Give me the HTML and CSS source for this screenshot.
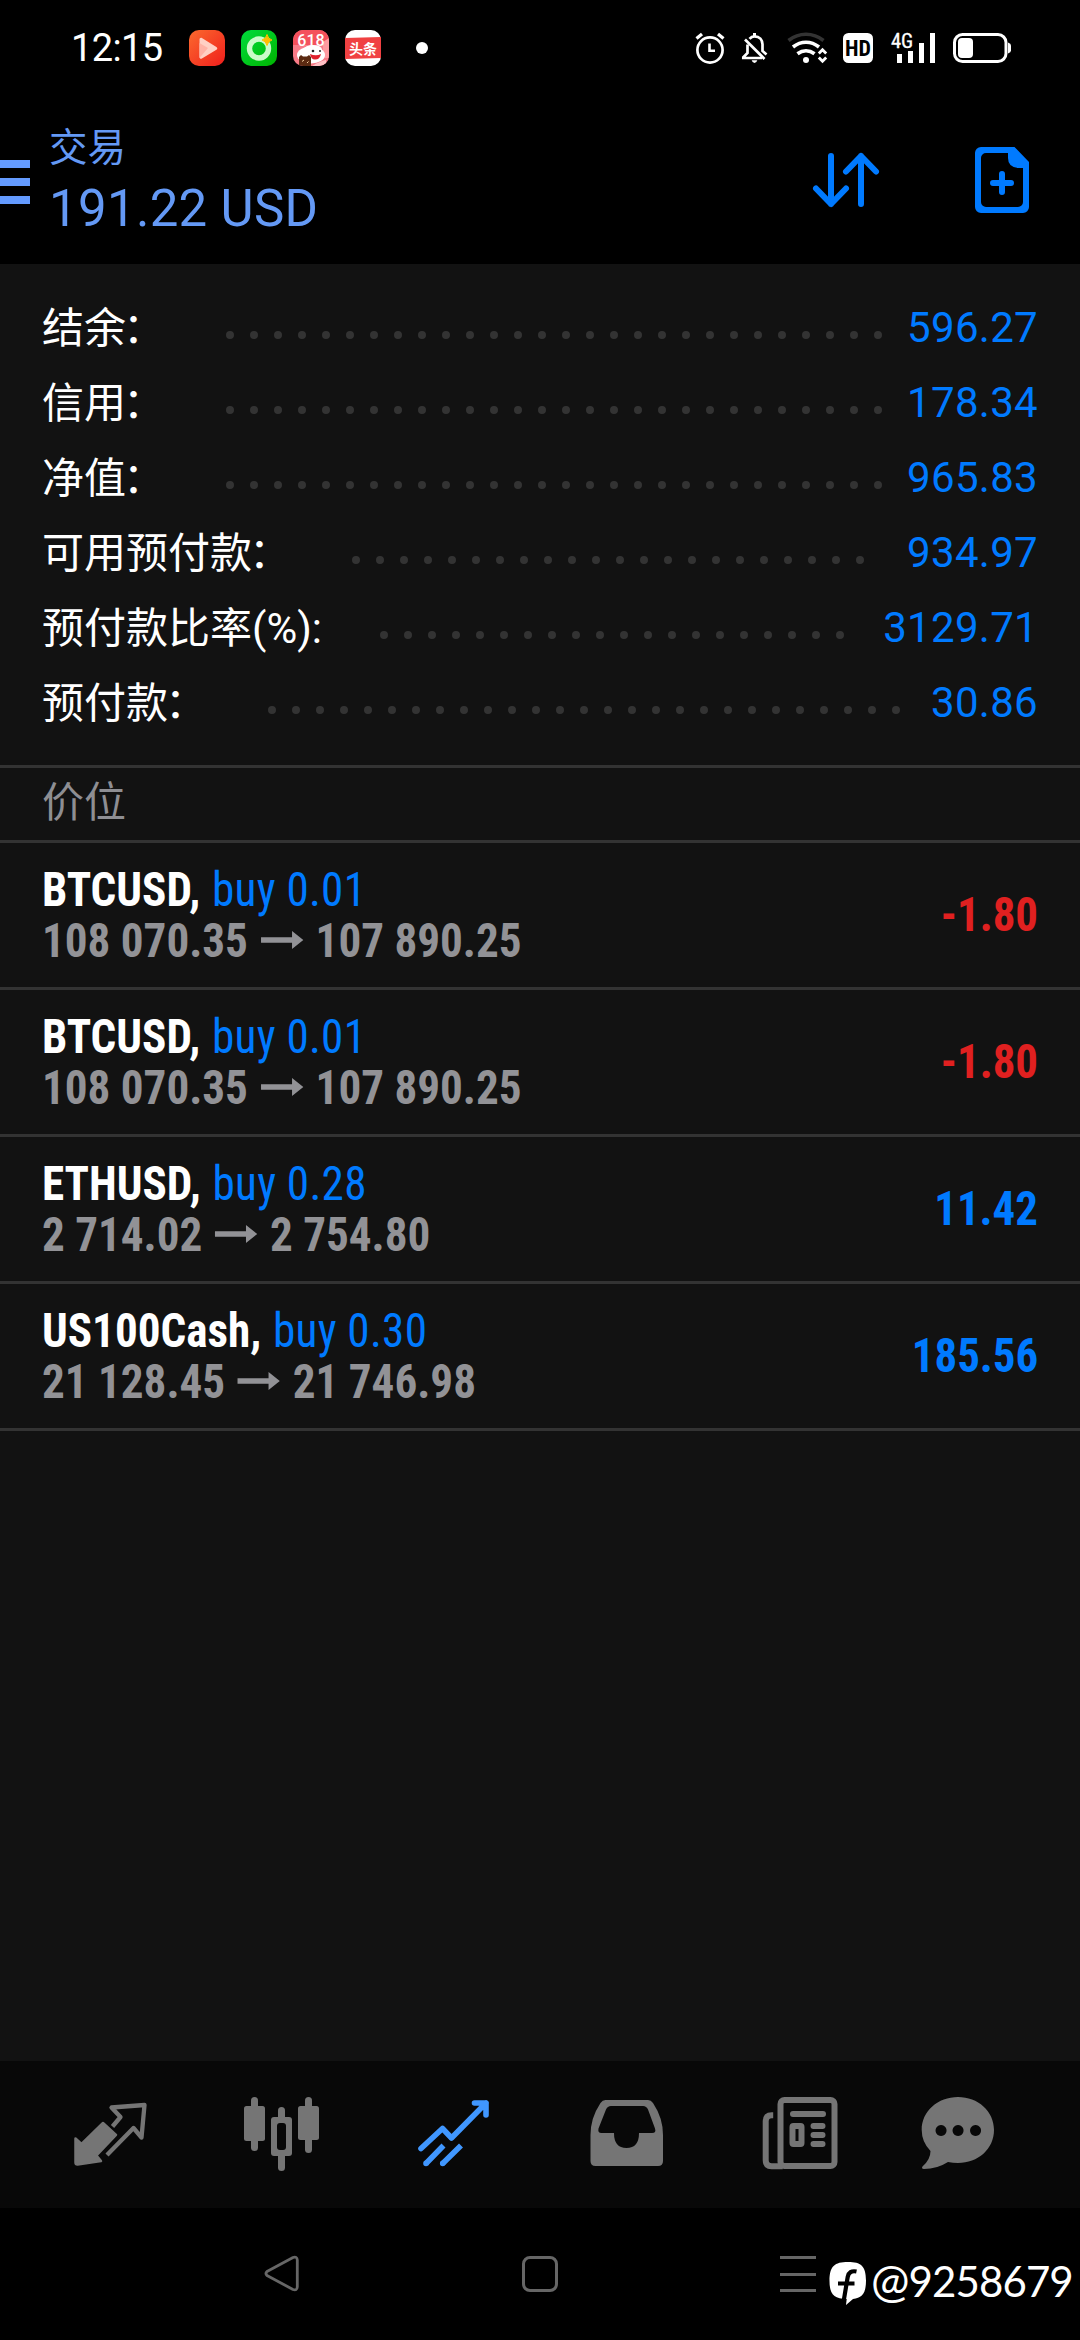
FILE: index.html
```html
<!DOCTYPE html>
<html lang="zh-CN">
<head>
<meta charset="utf-8">
<title>交易</title>
<link rel="stylesheet" href="styles.css">
</head>
<body>
<div class="screen">
  <div class="status">
    <span class="clock">12:15</span>
    <div class="apps">
      <svg width="36" height="36" viewBox="0 0 36 36">
        <defs><linearGradient id="gr" x1="0" y1="0" x2="1" y2="1"><stop offset="0" stop-color="#fb6a2e"/><stop offset="1" stop-color="#f01e1c"/></linearGradient></defs>
        <rect width="36" height="36" rx="10" fill="url(#gr)"/>
        <path d="M10.500 9.500v17.500c0 1.600 1.200 2.200 2.400 1.500l14.500-8.700c1.200-.8 1.200-2 0-2.800l-14.500-9C11.700 7.200 10.500 8.200 10.500 9.500z" fill="#ffd0c4"/>
        <path d="M10.500 13v15l8.500-10z" fill="#ffb3a6"/>
      </svg>
      <svg width="36" height="36" viewBox="0 0 36 36">
        <defs><linearGradient id="gg" x1="0" y1="0" x2="1" y2="1"><stop offset="0" stop-color="#00dc3c"/><stop offset="1" stop-color="#00b400"/></linearGradient></defs>
        <rect width="36" height="36" rx="10" fill="url(#gg)"/>
        <circle cx="18" cy="18.500" r="9.500" fill="none" stroke="#c9fbc9" stroke-width="5.400"/>
        <path d="M26 4.500q1 4.500 5 5.500-4 1-5 5.500-1-4.500-5-5.500 4-1 5-5.500z" fill="#ffbe00" stroke="#ffbe00" stroke-width="1"/>
      </svg>
      <svg width="36" height="36" viewBox="0 0 36 36">
        <defs><clipPath id="cp"><rect width="36" height="36" rx="10"/></clipPath></defs>
        <g clip-path="url(#cp)">
          <rect width="36" height="36" fill="#f97b88"/>
          <rect width="36" height="15" fill="#f4515c"/>
          <path d="M36 8v20h-6V12z" fill="#ff9aa0"/>
          <text x="18" y="16" text-anchor="middle" class="badge-618">618</text>
          <ellipse cx="18" cy="25" rx="14" ry="8.500" fill="#fff"/>
          <ellipse cx="20" cy="19.500" rx="9" ry="4.500" fill="#fff"/>
          <circle cx="20" cy="21" r="1.300" fill="#222"/><circle cx="27" cy="21" r="1" fill="#222"/>
          <path d="M17 24q6 2.500 11 0-1 5.500-6 5.500-4 0-5-5.500z" fill="#e0202c"/>
          <path d="M19 36q8-5 14-6v6z" fill="#ffc0c4"/>
          <path d="M6 27l2-2 2 1.500h4l2-1.500 2 2v9H6z" fill="#5a2a12"/>
          <path d="M9 31.500l2-1.500m3 3 1.500-1.500" stroke="#f4d0a0" stroke-width="1"/>
        </g>
      </svg>
      <svg width="36" height="36" viewBox="0 0 36 36">
        <rect width="36" height="36" rx="10" fill="#fff"/>
        <path d="M0 8l36-1v21L0 29z" fill="#f04142"/>
        <text x="18" y="23.500" text-anchor="middle" class="badge-toutiao">头条</text>
      </svg>
    </div>
    <span class="more-dot"></span>
    <div class="system">
      <svg class="alarm" width="30" height="32" viewBox="695 32 30 32" fill="none" stroke="#fff">
        <circle cx="710" cy="50" r="12.600" stroke-width="2.700"/>
        <path d="M709.500 43.500v7.300h5.500" stroke-width="2.600"/>
        <path d="M696.500 38.500l5.500-4.600M723.500 38.500l-5.500-4.600" stroke-width="3.200"/>
      </svg>
      <svg class="bell" width="28" height="32" viewBox="741 32 28 32" fill="none" stroke="#fff" stroke-width="2.700">
        <path d="M747.500 44.500V53l-4.200 4.200v.8H762"/>
        <path d="M749.500 38.800c1.400-1.700 3.100-2.500 5-2.500 5 0 8 3.400 8 8V51l4 3.500"/>
        <path d="M745 39.500L764.500 59"/>
        <path d="M754.500 33v3" stroke-width="3"/>
        <path d="M751.700 60.200h5.600q-.8 2.800-2.800 2.800t-2.800-2.800z" fill="#fff" stroke="none"/>
      </svg>
      <svg class="wifi" width="42" height="32" viewBox="787 32 42 32" fill="none" stroke="#fff" stroke-width="3.600">
        <path d="M788.500 40.500q8-6.200 17.500-6.200t17.500 6.200" stroke="#333"/>
        <path d="M793 47q6-4.800 13-4.800t13 4.800"/>
        <path d="M797.500 53.800q4-3 8.500-3t8.500 3"/>
        <circle cx="806" cy="60" r="3" fill="#fff" stroke="none"/>
        <path d="M818.800 53.500l3.700-3.800 3.700 3.800M818.800 57.500l3.700 3.800 3.700-3.800" stroke-width="2.800"/>
      </svg>
      <svg class="hd" width="30" height="30" viewBox="0 0 30 30">
        <rect width="30" height="30" rx="5.500" fill="#fff"/>
        <text x="15" y="22.800" text-anchor="middle" class="hd-text">HD</text>
      </svg>
      <svg class="signal" width="46" height="32" viewBox="890 32 46 32">
        <text x="891" y="48" class="net-text">4G</text>
        <path d="M899.500 54v9M910.500 51v12M921.500 43v20M932.500 33v30" stroke="#fff" stroke-width="5"/>
      </svg>
      <svg class="battery" width="60" height="32" viewBox="952 32 60 32">
        <rect x="954.500" y="34.500" width="51.500" height="27" rx="8" fill="none" stroke="#fff" stroke-width="3"/>
        <rect x="958" y="38" width="15" height="20" rx="4" fill="#fff"/>
        <path d="M1008 42.500q3 1 3 3v5q0 2-3 3z" fill="#fff"/>
      </svg>
    </div>
  </div>

  <header class="header">
    <div class="burger"><i></i><i></i><i></i></div>
    <div class="titles">
      <div class="title">交易</div>
      <div class="total">191.22 USD</div>
    </div>
    <svg class="sort" width="68" height="56" viewBox="812 152 68 56" fill="none" stroke="#007aff" stroke-width="6" stroke-linecap="round" stroke-linejoin="round">
      <path d="M831 156v48M816 188.500l15 15.500 15-15.500M861 204v-48M846 171.500l15-15.500 15 15.500"/>
    </svg>
    <svg class="new" width="54" height="66" viewBox="975 147 54 66">
      <path fill="#007aff" fill-rule="evenodd" d="M981 147h33.500l14.500 15v45a6 6 0 0 1-6 6h-42a6 6 0 0 1-6-6v-54a6 6 0 0 1 6-6zM986 153a5 5 0 0 0-5 5v44a5 5 0 0 0 5 5h32a5 5 0 0 0 5-5v-34h-5q-10-1-10-10v-5z"/>
      <path d="M1002 174v18M993 183h18" stroke="#007aff" stroke-width="6" stroke-linecap="round"/>
    </svg>
  </header>

  <main class="content">
    <section class="summary">
      <div class="row"><span>结余<i>：</i></span><svg class="leader" height="8"><line x1="0" y1="4" x2="100%" y2="4"/></svg><b>596.27</b></div>
      <div class="row"><span>信用<i>：</i></span><svg class="leader" height="8"><line x1="0" y1="4" x2="100%" y2="4"/></svg><b>178.34</b></div>
      <div class="row"><span>净值<i>：</i></span><svg class="leader" height="8"><line x1="0" y1="4" x2="100%" y2="4"/></svg><b>965.83</b></div>
      <div class="row"><span>可用预付款<i>：</i></span><svg class="leader" height="8"><line x1="0" y1="4" x2="100%" y2="4"/></svg><b>934.97</b></div>
      <div class="row"><span>预付款比率(%):</span><svg class="leader" height="8"><line x1="0" y1="4" x2="100%" y2="4"/></svg><b>3129.71</b></div>
      <div class="row"><span>预付款<i>：</i></span><svg class="leader" height="8"><line x1="0" y1="4" x2="100%" y2="4"/></svg><b>30.86</b></div>
    </section>
    <h2 class="section">价位</h2>
    <section class="positions">
      <article class="position">
        <div class="deal"><p class="symbol">BTCUSD, <em>buy 0.01</em></p>
        <p class="prices">108 070.35<svg class="arrow" viewBox="0 0 45 18"><path d="M0 6.200h33V0l12 9-12 9v-6.200H0z"/></svg>107 890.25</p></div>
        <span class="profit loss">-1.80</span>
      </article>
      <article class="position">
        <div class="deal"><p class="symbol">BTCUSD, <em>buy 0.01</em></p>
        <p class="prices">108 070.35<svg class="arrow" viewBox="0 0 45 18"><path d="M0 6.200h33V0l12 9-12 9v-6.200H0z"/></svg>107 890.25</p></div>
        <span class="profit loss">-1.80</span>
      </article>
      <article class="position">
        <div class="deal"><p class="symbol">ETHUSD, <em>buy 0.28</em></p>
        <p class="prices">2 714.02<svg class="arrow" viewBox="0 0 45 18"><path d="M0 6.200h33V0l12 9-12 9v-6.200H0z"/></svg>2 754.80</p></div>
        <span class="profit">11.42</span>
      </article>
      <article class="position">
        <div class="deal"><p class="symbol">US100Cash, <em>buy 0.30</em></p>
        <p class="prices">21 128.45<svg class="arrow" viewBox="0 0 45 18"><path d="M0 6.200h33V0l12 9-12 9v-6.200H0z"/></svg>21 746.98</p></div>
        <span class="profit">185.56</span>
      </article>
    </section>
  </main>

  <nav class="tabs">
    <svg width="80" height="80" viewBox="70 2094 80 80">
      <path d="M103 2123l13 12-19.500 20.500 4.500 5.500-23.500 3.500q-2 0-2-2v-24l6 5.500z" fill="currentColor" stroke="currentColor" stroke-width="2.500" stroke-linejoin="round"/>
      <path d="M112.500 2126.500l8-9.500-9-9.500 33-2.500-3 32.500-8-9.500-26.500 27" fill="none" stroke="currentColor" stroke-width="4.300" stroke-linejoin="round"/>
    </svg>
    <svg width="80" height="80" viewBox="242 2094 80 80" fill="currentColor">
      <rect x="251" y="2097" width="7" height="54" rx="3.500"/><rect x="244" y="2106" width="21" height="35" rx="2.500"/>
      <rect x="305" y="2097" width="7" height="56" rx="3.500"/><rect x="298" y="2106" width="21" height="34" rx="2.500"/>
      <rect x="278" y="2107" width="7" height="16" rx="3.500"/><rect x="278" y="2150" width="7" height="21" rx="3.500"/>
      <path d="M274 2117h15q3 0 3 3v33q0 3-3 3h-15q-3 0-3-3v-33q0-3 3-3z"/>
      <rect x="277" y="2123" width="9" height="27" rx="3" fill="#080808"/>
    </svg>
    <svg class="active" width="80" height="80" viewBox="414 2094 80 80" fill="none" stroke="currentColor" stroke-width="5.600" stroke-linecap="round" stroke-linejoin="round">
      <path d="M421 2148.500l21.500-20 9 9.500 34.500-35M474.500 2103H486v12"/>
      <path d="M443.500 2145.500L426 2163.500M461 2145.500L442.700 2163.500" stroke-linecap="butt"/>
      <path d="M426 2163.400v.1M442.700 2163.400v.1"/>
    </svg>
    <svg width="80" height="80" viewBox="586 2094 80 80">
      <path fill="currentColor" fill-rule="evenodd" d="M605.500 2100H648q3 0 5 3 10 15 10 32v26q0 5-5 5h-62.500q-5 0-5-5v-26q0-17 10-32 2-3 5-3zM611 2106q-3.500 0-5 3.500l-7.500 19q-1 4.500 3 4.500H614q0 15 12.500 15t12.500-15h13q4.500 0 3-4.500l-7-19q-1.500-3.500-5-3.500z"/>
    </svg>
    <svg width="80" height="80" viewBox="758 2094 80 80" fill="none" stroke="currentColor" stroke-width="6">
      <rect x="780.500" y="2100" width="54" height="66" rx="4"/>
      <path d="M773.200 2115.200h-1.500q-6 0-6 6v39q0 6 6 6h11"/>
      <path d="M793 2114h30M813.500 2126h9M813.500 2135h9M813.500 2144h9" stroke-linecap="round"/>
      <rect x="792.500" y="2126" width="9" height="18" rx="1"/>
    </svg>
    <svg class="chat" width="80" height="80" viewBox="918 2094 80 80">
      <path fill="currentColor" fill-rule="evenodd" d="M958 2097c20 0 36 14 36 33s-16 33-36 33q-5 0-10-1-11 7-24 7-3-.5-1.500-2.500 8-7 8-15.500-8.800-9-8.800-21c0-19 16.300-33 36.300-33zM941 2125a5.500 5.500 0 1 0 .1 0zM958 2125a5.500 5.500 0 1 0 .1 0zM975.500 2125a5.500 5.500 0 1 0 .1 0z"/>
    </svg>
  </nav>

  <footer class="sysnav">
    <svg class="back" width="36" height="38" viewBox="264 2255 36 38" fill="none" stroke="#666" stroke-width="2.800" stroke-linejoin="round"><path d="M267 2271.500q-2 2 0 4l26 14q4 1.500 4.300-2.500v-27q-.3-4-4.300-2.500z"/></svg>
    <span class="home"></span>
    <span class="recent"><i></i><i></i><i></i></span>
    <div class="mark">
      <svg width="38" height="44" viewBox="829 2261 38 44">
        <path fill="#fff" d="M848 2262c13 0 18 4 18 18.500 0 13-4 17.500-13 18.500l-7 6 .7-6C834 2299 829.500 2294 829.500 2281c0-15 5-19 18.500-19z"/>
        <path d="M856.500 2271.500q-7.500-1.500-8.800 5.500l-4.200 25M838 2283.500h16.500" fill="none" stroke="#000" stroke-width="4.200"/>
      </svg>
      <span><i>@</i>9258679</span>
    </div>
  </footer>
</div>
</body>
</html>
```
FILE: styles.css
```css
* { box-sizing: border-box; margin: 0; padding: 0; }
body { background: #000; }
svg { display: block; flex: none; overflow: visible; }
.screen {
  width: 1080px; height: 2340px; background: #000; overflow: hidden;
  display: flex; flex-direction: column;
  font-family: Roboto, "Noto Sans CJK SC", sans-serif; color: #fff;
}

/* status bar */
.status { height: 96px; display: flex; align-items: center; padding: 0 69px 0 71px; flex: none; }
.clock { width: 118px; font-size: 38px; line-height: 96px; letter-spacing: -.6px; }
.apps { display: flex; gap: 16px; }
.more-dot { width: 12px; height: 12px; border-radius: 50%; background: #fff; margin-left: 35px; }
.badge-618 { font: 500 16px Roboto, sans-serif; fill: #fff; }
.badge-toutiao { font: 700 14px "Noto Sans CJK SC", sans-serif; fill: #fff; }
.system { margin-left: auto; display: flex; align-items: center; }
.bell { margin-left: 16px; }
.wifi { margin-left: 18px; }
.hd { margin-left: 14px; }
.hd-text { font: 700 22px "Roboto Condensed", sans-serif; fill: #000; }
.signal { margin-left: 17px; }
.net-text { font: 400 20.500px "Roboto Condensed", sans-serif; fill: #fff; stroke: #fff; stroke-width: .3; }
.battery { margin-left: 16px; margin-right: -1px; }

/* header */
.header { height: 168px; display: flex; align-items: flex-start; flex: none; color: #6499f5; }
.burger { width: 30px; padding-top: 64px; display: flex; flex-direction: column; gap: 10px; }
.burger i { height: 8px; background: #649bff; }
.titles { padding: 22px 0 0 19px; }
.title { line-height: 60px; font-size: 38.500px; }
.total { line-height: 62px; font-size: 51px; letter-spacing: .3px; white-space: nowrap; }
.sort { margin: 56px 0 0 auto; }
.new { margin: 51px 51px 0 95px; }

/* account summary */
.content { background: #121212; height: 1797px; flex: none; }
.summary { padding: 26px 42px 25px; border-bottom: 3px solid #333; }
.row { display: flex; align-items: center; height: 75px; font-size: 42px; line-height: 75px; white-space: nowrap; }
.row span { line-height: 73px; padding-top: 2px; }
.row i { font-style: normal; margin: 0 3px 0 -3px; }
.row b { font-weight: 400; color: #007aff; letter-spacing: .3px; }
.leader { flex: 1; width: 0; height: 8px; margin: 15px 27px 0 62px; }
.leader line { stroke: #333; stroke-width: 8; stroke-linecap: round; stroke-dasharray: 0 24; }
.section { height: 75px; border-bottom: 3px solid #333; padding-left: 42px; font-size: 42px; font-weight: 400; line-height: 70px; color: #8e8e93; }

/* open positions */
.position {
  height: 147px; border-bottom: 3px solid #333; padding: 0 42px;
  display: flex; align-items: center; justify-content: space-between;
  font: 700 48px/51px "Roboto Condensed", Roboto, sans-serif; white-space: nowrap;
}
.deal { transform: scaleX(.94); transform-origin: left; }
.symbol em { font-style: normal; font-weight: 400; color: #007aff; margin-left: 1.500px; letter-spacing: .3px; }
.prices { color: #929296; }
.arrow { display: inline-block; width: 45px; height: 18px; margin: 0 13.500px; vertical-align: 8px; fill: currentColor; }
.profit { color: #007aff; transform: scaleX(.935); transform-origin: right; padding-bottom: 2px; }
.loss { color: #e02020; }

/* tab bar */
.tabs { height: 147px; background: #080808; color: #757575; display: flex; gap: 92px; padding: 33px 0 0 70px; flex: none; }
.active { color: #4097ff; }
.chat { margin-left: -12px; }

/* system navigation */
.sysnav { height: 132px; display: flex; align-items: flex-start; padding-left: 264px; }
.back { margin-top: 47px; }
.home { width: 36px; height: 36px; border: 3px solid #666; border-radius: 8px; margin: 48px 0 0 222px; }
.recent { width: 36px; margin: 48px 0 0 222px; display: flex; flex-direction: column; gap: 13.500px; }
.recent i { height: 3px; background: #666; }
.mark { display: flex; align-items: flex-start; margin: 53px 0 0 13px; font: 42px/40px Lato, sans-serif; letter-spacing: -.9px; white-space: nowrap; }
.mark span { padding-left: 4px; }
.mark i { font-style: normal; font-size: 46px; line-height: 30px; }
```
